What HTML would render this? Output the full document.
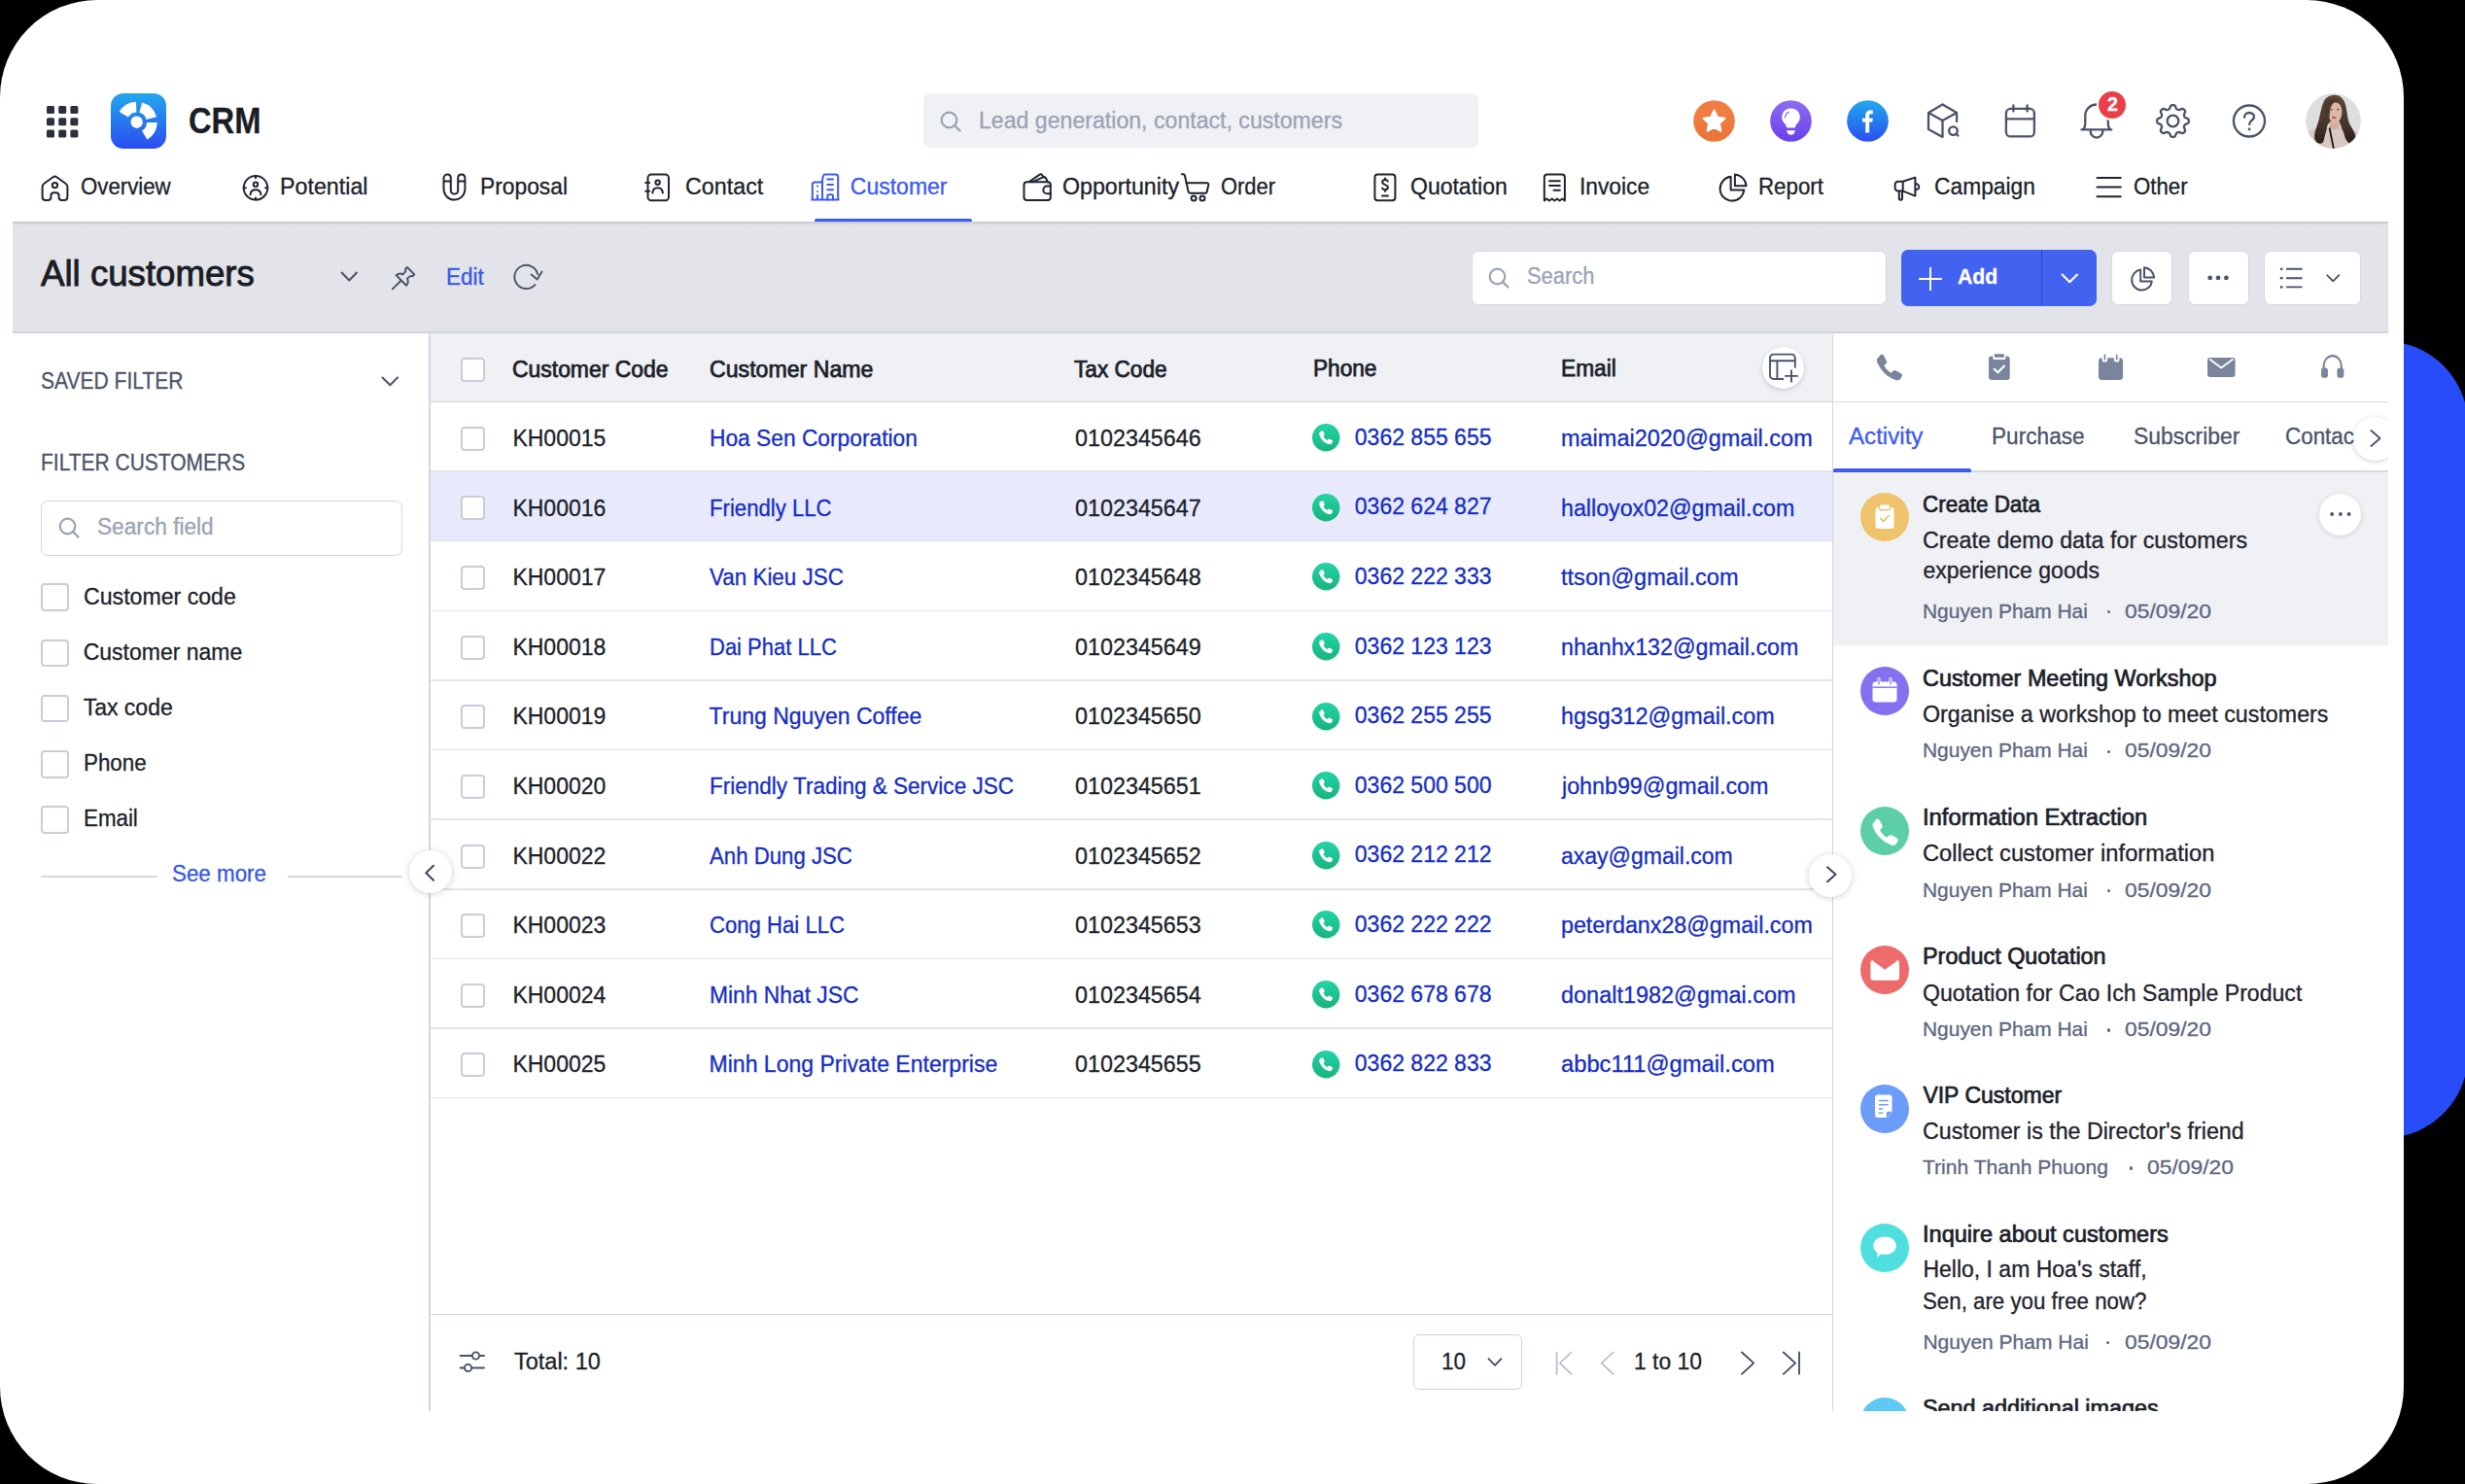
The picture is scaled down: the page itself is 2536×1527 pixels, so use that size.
<!DOCTYPE html>
<html><head><meta charset="utf-8"><style>
html,body{margin:0;padding:0;}
body{width:2536px;height:1527px;overflow:hidden;background:#000;position:relative;font-family:"Liberation Sans", sans-serif;}
.t{position:absolute;white-space:pre;font-family:"Liberation Sans", sans-serif;-webkit-text-stroke:0.3px currentColor;}
svg{display:block}
</style></head><body>
<div style="position:absolute;left:2300.0px;top:351.3px;width:239.0px;height:819.7px;background:#284cf7;border-radius:86px;"></div><div style="position:absolute;left:0.0px;top:0.0px;width:2473.0px;height:1527.0px;background:#fff;border-radius:100px;"></div><svg style="position:absolute;left:48.0px;top:108.5px;overflow:visible;" width="32" height="32" viewBox="0 0 32 32"><rect x="0.0" y="0.0" width="8" height="8" rx="1.5" fill="#2b303c"/><rect x="12.2" y="0.0" width="8" height="8" rx="1.5" fill="#2b303c"/><rect x="24.4" y="0.0" width="8" height="8" rx="1.5" fill="#2b303c"/><rect x="0.0" y="12.2" width="8" height="8" rx="1.5" fill="#2b303c"/><rect x="12.2" y="12.2" width="8" height="8" rx="1.5" fill="#2b303c"/><rect x="24.4" y="12.2" width="8" height="8" rx="1.5" fill="#2b303c"/><rect x="0.0" y="24.4" width="8" height="8" rx="1.5" fill="#2b303c"/><rect x="12.2" y="24.4" width="8" height="8" rx="1.5" fill="#2b303c"/><rect x="24.4" y="24.4" width="8" height="8" rx="1.5" fill="#2b303c"/></svg><svg style="position:absolute;left:114.0px;top:96.0px;overflow:visible;" width="57" height="57" viewBox="0 0 57 57"><defs><linearGradient id="lg" x1="0" y1="0" x2="0" y2="1"><stop offset="0" stop-color="#22a7ee"/><stop offset="1" stop-color="#2b4cf0"/></linearGradient></defs><rect x="0" y="0" width="57" height="57" rx="13" fill="url(#lg)"/><circle cx="26.7" cy="29.7" r="6.2" fill="#fff"/><path d="M17.87,24.40 L8.70,18.88 A21,21 0 0 1 25.97,8.71 L26.34,19.41 A10.3,10.3 0 0 0 17.87,24.40Z" fill="#fff"/><path d="M29.37,19.75 L32.14,9.42 A21,21 0 0 1 46.98,24.26 L36.65,27.03 A10.3,10.3 0 0 0 29.37,19.75Z" fill="#fff"/><path d="M37.00,29.88 L47.70,30.07 A21,21 0 0 1 37.52,47.70 L32.00,38.53 A10.3,10.3 0 0 0 37.00,29.88Z" fill="#fff"/></svg><div class="t" style="left:193.5px;top:106.7px;font-size:36px;line-height:36px;color:#1a1d26;font-weight:700;transform:scaleX(0.9086);transform-origin:0 0;">CRM</div><div style="position:absolute;left:950.0px;top:96.0px;width:571.0px;height:56.0px;background:#f0f1f4;border-radius:7px;"></div><svg style="position:absolute;left:967.0px;top:114.0px;overflow:visible;" width="22" height="22" viewBox="0 0 22 22"><circle cx="9.5" cy="9.5" r="7.8" fill="none" stroke="#9aa3b4" stroke-width="2.2"/><path d="M15.3 15.3 L20.5 20.5" stroke="#9aa3b4" stroke-width="2.4" stroke-linecap="round"/></svg><div class="t" style="left:1007.4px;top:112.9px;font-size:23px;line-height:23px;color:#9aa3b4;font-weight:400;transform:scaleX(1.0052);transform-origin:0 0;">Lead generation, contact, customers</div><svg style="position:absolute;left:1742.0px;top:103.0px;overflow:visible;" width="43" height="43" viewBox="0 0 43 43"><defs><linearGradient id="og" x1="0" y1="0" x2="0" y2="1"><stop offset="0" stop-color="#f07f45"/><stop offset="1" stop-color="#ec7537"/></linearGradient></defs><circle cx="21.5" cy="21.5" r="21.3" fill="url(#og)"/><polygon points="21.50,10.80 24.79,17.77 32.44,18.75 26.83,24.03 28.26,31.60 21.50,27.90 14.74,31.60 16.17,24.03 10.56,18.75 18.21,17.77" fill="#fff" stroke="#fff" stroke-width="2.2" stroke-linejoin="round"/></svg><svg style="position:absolute;left:1821.0px;top:103.0px;overflow:visible;" width="43" height="43" viewBox="0 0 43 43"><defs><linearGradient id="pg" x1="0" y1="0" x2="0" y2="1"><stop offset="0" stop-color="#8b6ff2"/><stop offset="1" stop-color="#6a3fea"/></linearGradient></defs><circle cx="21.5" cy="21.5" r="21.3" fill="url(#pg)"/><path d="M21.5,8.5 C15.8,8.5 12.2,12.6 12.2,17.6 C12.2,21 14,23.4 16.2,25.6 L17.3,28.5 L25.7,28.5 L26.8,25.6 C29,23.4 30.8,21 30.8,17.6 C30.8,12.6 27.2,8.5 21.5,8.5Z" fill="#fff"/><path d="M17.3,31.3 L25.7,31.3 C25.7,34.2 24,35.8 21.5,35.8 C19,35.8 17.3,34.2 17.3,31.3Z" fill="#fff"/><path d="M15.6,18 C15.8,15.2 17.2,13.2 19.5,12.2" fill="none" stroke="#7b55ee" stroke-width="1.2" stroke-linecap="round"/></svg><svg style="position:absolute;left:1899.5px;top:103.0px;overflow:visible;" width="43" height="43" viewBox="0 0 43 43"><defs><linearGradient id="fg" x1="0" y1="0" x2="0" y2="1"><stop offset="0" stop-color="#21a8ef"/><stop offset="1" stop-color="#2a4ff0"/></linearGradient></defs><circle cx="21.5" cy="21.5" r="21.3" fill="url(#fg)"/><path d="M19.2,33.6 L19.2,22.6 L16,22.6 L16,18.8 L19.2,18.8 L19.2,16 C19.2,12.6 21.2,10.6 24.4,10.6 C25.5,10.6 26.4,10.7 26.8,10.8 L26.8,14.2 L24.9,14.2 C23.4,14.2 23.1,14.9 23.1,16 L23.1,18.8 L26.8,18.8 L26.3,22.6 L23.1,22.6 L23.1,33.6Z" fill="#fff"/></svg><svg style="position:absolute;left:1982.0px;top:105.0px;overflow:visible;" width="36" height="38" viewBox="0 0 36 38"><path d="M16.5,2.4 L31.1,11.1 L31.1,20.1 M16.5,2.4 L2,11.1 L2,28 L16.5,35.9 M2,11.1 L16.5,19 L31.1,11.1 M16.5,19 L16.5,35.9" fill="none" stroke="#4a5367" stroke-width="2.3" stroke-linecap="round" stroke-linejoin="round"/><circle cx="27.5" cy="29.6" r="4.3" fill="none" stroke="#4a5367" stroke-width="2.3" stroke-linecap="round" stroke-linejoin="round"/><path d="M30.7,32.8 L32.4,34.5" fill="none" stroke="#4a5367" stroke-width="2.3" stroke-linecap="round" stroke-linejoin="round"/></svg><svg style="position:absolute;left:2062.0px;top:107.0px;overflow:visible;" width="33" height="35" viewBox="0 0 33 35"><rect x="1.9" y="4.9" width="29" height="28.5" rx="4.5" fill="none" stroke="#4a5367" stroke-width="2.3" stroke-linecap="round" stroke-linejoin="round"/><path d="M1.9,15.4 L30.9,15.4 M9.4,1.4 L9.4,7.6 M23.6,1.4 L23.6,7.6" fill="none" stroke="#4a5367" stroke-width="2.3" stroke-linecap="round" stroke-linejoin="round"/></svg><svg style="position:absolute;left:2140.0px;top:106.0px;overflow:visible;" width="34" height="38" viewBox="0 0 34 38"><path d="M1.5,27.4 L32.3,27.4 M3,27.4 C4.8,25.8 5.3,23.5 5.3,20 L5.3,13 C5.3,6.5 10.5,1.5 17,1.5 C23.5,1.5 28.8,6.5 28.8,13 L28.8,20 C28.8,23.5 29.3,25.8 31,27.4" fill="none" stroke="#4a5367" stroke-width="2.3" stroke-linecap="round" stroke-linejoin="round"/><path d="M10.6,28.2 C10.6,32.6 13.5,35.6 17,35.6 C20.5,35.6 23.4,32.6 23.4,28.2" fill="none" stroke="#4a5367" stroke-width="2.3" stroke-linecap="round" stroke-linejoin="round"/></svg><div style="position:absolute;left:2156.6px;top:91.6px;width:32.8px;height:32.8px;background:#ea3f48;border:2.3px solid #fff;border-radius:50%;box-sizing:border-box;"></div><div class="t" style="left:2168.4px;top:96.9px;font-size:20px;line-height:20px;color:#fff;font-weight:700;transform:scaleX(0.9820);transform-origin:0 0;">2</div><svg style="position:absolute;left:2218.0px;top:106.9px;overflow:visible;" width="35" height="35" viewBox="0 0 35 35"><path d="M17.50,1.10 L18.14,1.14 L18.78,1.27 L19.38,1.58 L19.92,2.22 L20.34,3.23 L20.68,4.25 L21.05,4.92 L21.46,5.30 L21.90,5.56 L22.36,5.77 L22.83,5.94 L23.32,6.07 L23.89,6.09 L24.62,5.88 L25.58,5.40 L26.59,4.99 L27.42,4.91 L28.07,5.12 L28.62,5.48 L29.10,5.90 L29.52,6.38 L29.88,6.93 L30.09,7.58 L30.01,8.41 L29.60,9.42 L29.12,10.38 L28.91,11.11 L28.93,11.68 L29.06,12.17 L29.23,12.64 L29.44,13.10 L29.70,13.54 L30.08,13.95 L30.75,14.32 L31.77,14.66 L32.78,15.08 L33.42,15.62 L33.73,16.22 L33.86,16.86 L33.90,17.50 L33.86,18.14 L33.73,18.78 L33.42,19.38 L32.78,19.92 L31.77,20.34 L30.75,20.68 L30.08,21.05 L29.70,21.46 L29.44,21.90 L29.23,22.36 L29.06,22.83 L28.93,23.32 L28.91,23.89 L29.12,24.62 L29.60,25.58 L30.01,26.59 L30.09,27.42 L29.88,28.07 L29.52,28.62 L29.10,29.10 L28.62,29.52 L28.07,29.88 L27.42,30.09 L26.59,30.01 L25.58,29.60 L24.62,29.12 L23.89,28.91 L23.32,28.93 L22.83,29.06 L22.36,29.23 L21.90,29.44 L21.46,29.70 L21.05,30.08 L20.68,30.75 L20.34,31.77 L19.92,32.78 L19.38,33.42 L18.78,33.73 L18.14,33.86 L17.50,33.90 L16.86,33.86 L16.22,33.73 L15.62,33.42 L15.08,32.78 L14.66,31.77 L14.32,30.75 L13.95,30.08 L13.54,29.70 L13.10,29.44 L12.64,29.23 L12.17,29.06 L11.68,28.93 L11.11,28.91 L10.38,29.12 L9.42,29.60 L8.41,30.01 L7.58,30.09 L6.93,29.88 L6.38,29.52 L5.90,29.10 L5.48,28.62 L5.12,28.07 L4.91,27.42 L4.99,26.59 L5.40,25.58 L5.88,24.62 L6.09,23.89 L6.07,23.32 L5.94,22.83 L5.77,22.36 L5.56,21.90 L5.30,21.46 L4.92,21.05 L4.25,20.68 L3.23,20.34 L2.22,19.92 L1.58,19.38 L1.27,18.78 L1.14,18.14 L1.10,17.50 L1.14,16.86 L1.27,16.22 L1.58,15.62 L2.22,15.08 L3.23,14.66 L4.25,14.32 L4.92,13.95 L5.30,13.54 L5.56,13.10 L5.77,12.64 L5.94,12.17 L6.07,11.68 L6.09,11.11 L5.88,10.38 L5.40,9.42 L4.99,8.41 L4.91,7.58 L5.12,6.93 L5.48,6.38 L5.90,5.90 L6.38,5.48 L6.93,5.12 L7.58,4.91 L8.41,4.99 L9.42,5.40 L10.38,5.88 L11.11,6.09 L11.68,6.07 L12.17,5.94 L12.64,5.77 L13.10,5.56 L13.54,5.30 L13.95,4.92 L14.32,4.25 L14.66,3.23 L15.08,2.22 L15.62,1.58 L16.22,1.27 L16.86,1.14 L17.50,1.10Z" fill="none" stroke="#4a5367" stroke-width="2.3" stroke-linecap="round" stroke-linejoin="round"/><circle cx="17.5" cy="17.5" r="5.8" fill="none" stroke="#4a5367" stroke-width="2.3" stroke-linecap="round" stroke-linejoin="round"/></svg><svg style="position:absolute;left:2296.0px;top:107.0px;overflow:visible;" width="36" height="36" viewBox="0 0 36 36"><circle cx="18" cy="17.5" r="16" fill="none" stroke="#4a5367" stroke-width="2.3" stroke-linecap="round" stroke-linejoin="round"/><path d="M13,13.8 C13,10.8 15.2,9 18,9 C20.8,9 23,10.8 23,13.5 C23,16.6 18.2,17 18.2,21" fill="none" stroke="#4a5367" stroke-width="2.3" stroke-linecap="round" stroke-linejoin="round"/><circle cx="18.1" cy="26" r="1.4" fill="#4a5367"/></svg><svg style="position:absolute;left:2371.5px;top:96.2px;overflow:visible;" width="57" height="57" viewBox="0 0 57 57"><defs><clipPath id="avc"><circle cx="28.5" cy="28.5" r="28.3"/></clipPath><linearGradient id="hairg" x1="0" y1="0" x2="0" y2="1"><stop offset="0" stop-color="#5e4838"/><stop offset="0.6" stop-color="#45342a"/><stop offset="1" stop-color="#2a1f19"/></linearGradient></defs><g clip-path="url(#avc)"><rect width="57" height="57" fill="#dedde0"/><path d="M0,57 L1,44 C3,39 6,37 10,36.5 L29,35 L47,36.5 C52,38 55,42 57,47 L57,57Z" fill="#d8c8c3"/><path d="M29.3,1.8 C33,1.8 36,2.4 39.7,8 C41.6,12 42.4,18 43,23 C43.6,27 44.2,29 44.9,30.6 C46,33.5 48,36 50.5,41 C52,44.5 51.8,48.5 49.2,51.4 C47.5,52.5 46,52.2 45.4,51.8 C43,50 41.5,48 40.7,45.7 C39.8,43 39.2,40.5 38.3,38.6 C37.4,36 36.6,34 34.5,28.7 L23.7,30.6 C22.5,33 22,34.5 21.8,36.3 C21.2,39 20.5,41.5 19.9,43.3 C19.3,46 18.8,49 18,50.4 C16.5,51.8 14.8,51.8 13.8,51.4 C11.5,51 10,49.5 9.3,46.5 C8.8,43 9.6,39 11.4,34.4 C12.6,31 13.2,29 13.8,26.8 C14.6,23 15,20.5 15.7,18.3 C16.5,14.5 17,12.5 18,10.3 C19.2,7 20.2,5.5 21.8,4.6 C24,2.6 26.5,1.8 29.3,1.8Z" fill="url(#hairg)"/><path d="M24.6,29 L34.5,29 L34.8,36.3 C32.5,37.5 27,37.5 24.4,36.3Z" fill="#d4ae9c"/><path d="M30.6,9.4 C34.8,9.4 37.4,13.5 37.4,19 C37.4,25.5 34.2,30.6 30.2,30.6 C26.5,30.6 23.8,26.5 23,21 C22.5,15 25.8,9.4 30.6,9.4Z" fill="#dab8a7"/><path d="M19.5,11 C22.5,6 28,4.8 33.5,6.2 C30.5,7.5 27,11 25.5,16 C24.8,19.5 24.5,24 24.2,30.5 L21.5,31 C20.5,24 19.8,17 19.5,11Z" fill="#4b392d"/><ellipse cx="26.6" cy="16.8" rx="1.3" ry="0.8" fill="#6a5448"/><ellipse cx="33.2" cy="16.6" rx="1.3" ry="0.8" fill="#6a5448"/><ellipse cx="29.2" cy="25.1" rx="2.4" ry="1.05" fill="#c5505a"/><path d="M24.6,35.5 L28.9,57" stroke="#141414" stroke-width="1.8"/></g></svg><svg style="position:absolute;left:42.0px;top:178.5px;overflow:visible;" width="30" height="29" viewBox="0 0 30 29"><path d="M3.5,9.8 L12.6,3.2 C13.7,2.4 15.2,2.4 16.3,3.2 L25.4,9.8 C26.5,10.6 27.4,11.8 27.4,13.3 L27.4,23.5 C27.4,25.6 25.9,27 24,27 L21.8,27 C20,27 18.6,25.8 18.6,24 L18.6,22.3 C18.6,20.5 17.2,19.2 15.6,19.2 L13.4,19.2 C11.7,19.2 10.4,20.5 10.4,22.3 L10.4,24 C10.4,25.8 9,27 7.2,27 L5,27 C3.1,27 1.6,25.6 1.6,23.5 L1.6,13.3 C1.6,11.8 2.4,10.6 3.5,9.8Z" fill="none" stroke="#1f2430" stroke-width="2" stroke-linecap="round" stroke-linejoin="round"/><circle cx="14.5" cy="11.6" r="2.7" fill="none" stroke="#1f2430" stroke-width="2" stroke-linecap="round" stroke-linejoin="round"/></svg><div class="t" style="left:82.5px;top:180.5px;font-size:23px;line-height:23px;color:#1b1f2a;font-weight:400;transform:scaleX(0.9665);transform-origin:0 0;">Overview</div><svg style="position:absolute;left:249.0px;top:180.0px;overflow:visible;" width="28" height="28" viewBox="0 0 28 28"><circle cx="14" cy="13.3" r="12.3" fill="none" stroke="#1f2430" stroke-width="2" stroke-linecap="round" stroke-linejoin="round"/><path d="M14,1 L14,3.2 M14,23.4 L14,25.6 M1.7,13.3 L3.9,13.3 M24.1,13.3 L26.3,13.3" fill="none" stroke="#1f2430" stroke-width="2" stroke-linecap="round" stroke-linejoin="round"/><circle cx="14" cy="9.7" r="2.2" fill="none" stroke="#1f2430" stroke-width="2" stroke-linecap="round" stroke-linejoin="round"/><path d="M8.6,20.2 C8.8,17 11,15.2 14,15.2 C17,15.2 19.2,17 19.4,20.2" fill="none" stroke="#1f2430" stroke-width="2" stroke-linecap="round" stroke-linejoin="round"/></svg><div class="t" style="left:288.0px;top:180.5px;font-size:23px;line-height:23px;color:#1b1f2a;font-weight:400;transform:scaleX(1.0109);transform-origin:0 0;">Potential</div><svg style="position:absolute;left:454.0px;top:178.0px;overflow:visible;" width="28" height="30" viewBox="0 0 28 30"><path d="M2.5,5.5 C2.5,3.2 4.2,1.6 6.3,1.6 C8.4,1.6 9.8,3.2 9.8,5.5 L9.8,18.2 C9.8,20.3 11.6,21.6 13.5,21.6 C15.4,21.6 17.2,20.3 17.2,18.2 L17.2,5.5 C17.2,3.2 18.6,1.6 20.7,1.6 C22.8,1.6 24.4,3.2 24.4,5.5 L24.4,16 C24.4,23 19.5,27.6 13.5,27.6 C7.5,27.6 2.5,23 2.5,16Z M2.5,8.4 L9.8,8.4 M17.2,8.4 L24.4,8.4" fill="none" stroke="#1f2430" stroke-width="2" stroke-linecap="round" stroke-linejoin="round"/></svg><div class="t" style="left:494.0px;top:180.5px;font-size:23px;line-height:23px;color:#1b1f2a;font-weight:400;transform:scaleX(0.9913);transform-origin:0 0;">Proposal</div><svg style="position:absolute;left:662.0px;top:178.0px;overflow:visible;" width="28" height="30" viewBox="0 0 28 30"><rect x="4.5" y="1.6" width="21.5" height="26.6" rx="3.5" fill="none" stroke="#1f2430" stroke-width="2" stroke-linecap="round" stroke-linejoin="round"/><path d="M2.2,9.9 L6.2,9.9 M2.2,18.8 L6.2,18.8" fill="none" stroke="#1f2430" stroke-width="2" stroke-linecap="round" stroke-linejoin="round"/><circle cx="14.6" cy="9.8" r="2.2" fill="none" stroke="#1f2430" stroke-width="2" stroke-linecap="round" stroke-linejoin="round"/><path d="M9.3,20.6 C9.6,17.2 11.8,15.3 14.6,15.3 C17.4,15.3 19.6,17.2 19.9,20.6" fill="none" stroke="#1f2430" stroke-width="2" stroke-linecap="round" stroke-linejoin="round"/></svg><div class="t" style="left:704.7px;top:180.5px;font-size:23px;line-height:23px;color:#1b1f2a;font-weight:400;transform:scaleX(1.0127);transform-origin:0 0;">Contact</div><svg style="position:absolute;left:834.0px;top:178.0px;overflow:visible;" width="30" height="30" viewBox="0 0 30 30"><path d="M12,27.4 L12,8.2 C12,6.7 12.9,1.6 14.5,1.6 L25.8,1.6 C27.3,1.6 28.2,2.6 28.2,4.2 L28.2,27.4 Z M12,27.4 L12,9.6 L4.3,9.6 C2.8,9.6 1.8,10.6 1.8,12 L1.8,27.4 Z M1.2,27.4 L28.8,27.4" fill="none" stroke="#3d5af1" stroke-width="2" stroke-linecap="round" stroke-linejoin="round"/><path d="M17.3,6.6 L23,6.6 M17.3,11.9 L23,11.9 M17.3,17.2 L23,17.2 M7,13.5 L7,13.6 M7,19 L7,19.1 M7,23 L7,27 M17.3,27.4 L17.3,23.8 C17.3,22.9 18,22.3 18.8,22.3 L21.5,22.3 C22.3,22.3 23,22.9 23,23.8 L23,27.4" fill="none" stroke="#3d5af1" stroke-width="2" stroke-linecap="round" stroke-linejoin="round"/></svg><div class="t" style="left:874.8px;top:180.5px;font-size:23px;line-height:23px;color:#3d5af1;font-weight:400;">Customer</div><div style="position:absolute;left:838.0px;top:224.8px;width:161.5px;height:3.8px;background:#3d5af1;border-radius:2px 2px 0 0;"></div><svg style="position:absolute;left:1052.0px;top:178.0px;overflow:visible;" width="31" height="30" viewBox="0 0 31 30"><rect x="1.5" y="9.3" width="27.3" height="18.7" rx="3" fill="none" stroke="#1f2430" stroke-width="2" stroke-linecap="round" stroke-linejoin="round"/><path d="M6.5,9.3 L17.6,1.6 C18.4,1.1 19.4,1.3 20,2 L22,4.6 M9.9,9.3 L21.5,4.2 C22.4,3.8 23.4,4.2 23.9,5 L25.9,9.3" fill="none" stroke="#1f2430" stroke-width="2" stroke-linecap="round" stroke-linejoin="round"/><path d="M28.8,13.6 L25,13.6 C23,13.6 21.4,15.3 21.4,17.4 C21.4,19.6 23,21.3 25,21.3 L28.8,21.3" fill="none" stroke="#1f2430" stroke-width="2" stroke-linecap="round" stroke-linejoin="round"/></svg><div class="t" style="left:1093.0px;top:180.5px;font-size:23px;line-height:23px;color:#1b1f2a;font-weight:400;transform:scaleX(1.0092);transform-origin:0 0;">Opportunity</div><svg style="position:absolute;left:1215.0px;top:177.5px;overflow:visible;" width="31" height="31" viewBox="0 0 31 31"><path d="M0.9,1.3 L2.4,1.3 C3.2,1.3 3.8,1.9 4,2.7 L7.7,19.6 C7.9,20.3 8.5,20.7 9.2,20.7 L25.2,20.7 C25.9,20.7 26.5,20.2 26.6,19.5 L28.3,12.2 C28.5,11.2 27.8,10.3 26.8,10.3 L5.3,10.3" fill="none" stroke="#1f2430" stroke-width="2" stroke-linecap="round" stroke-linejoin="round"/><circle cx="13.1" cy="25.9" r="2.5" fill="none" stroke="#1f2430" stroke-width="2" stroke-linecap="round" stroke-linejoin="round"/><circle cx="22" cy="25.9" r="2.5" fill="none" stroke="#1f2430" stroke-width="2" stroke-linecap="round" stroke-linejoin="round"/></svg><div class="t" style="left:1255.7px;top:180.5px;font-size:23px;line-height:23px;color:#1b1f2a;font-weight:400;transform:scaleX(0.9529);transform-origin:0 0;">Order</div><svg style="position:absolute;left:1413.0px;top:178.0px;overflow:visible;" width="24" height="30" viewBox="0 0 24 30"><rect x="1.4" y="1.6" width="21" height="26.6" rx="3" fill="none" stroke="#1f2430" stroke-width="2" stroke-linecap="round" stroke-linejoin="round"/><path d="M14.8,8.6 C14.3,7.6 13.3,7.1 12,7.1 C10.3,7.1 9.2,8.1 9.2,9.5 C9.2,12.6 14.9,11.6 14.9,14.8 C14.9,16.2 13.7,17.2 12,17.2 C10.6,17.2 9.5,16.6 9.1,15.6 M12,5.4 L12,7.1 M12,17.2 L12,19 M9,23.5 L15,23.5" fill="none" stroke="#1f2430" stroke-width="2" stroke-linecap="round" stroke-linejoin="round"/></svg><div class="t" style="left:1451.0px;top:180.5px;font-size:23px;line-height:23px;color:#1b1f2a;font-weight:400;">Quotation</div><svg style="position:absolute;left:1587.0px;top:178.0px;overflow:visible;" width="25" height="31" viewBox="0 0 25 31"><path d="M1.8,28.5 L1.8,4.6 C1.8,2.8 3,1.6 4.8,1.6 L19.9,1.6 C21.7,1.6 22.9,2.8 22.9,4.6 L22.9,28.5 L20.3,26.5 L17.5,28.5 L14.9,26.5 L12.3,28.5 L9.7,26.5 L7,28.5 L4.4,26.5 Z" fill="none" stroke="#1f2430" stroke-width="2" stroke-linecap="round" stroke-linejoin="round"/><path d="M7,8.2 L17.8,8.2 M7,13 L17.8,13 M11.5,17.8 L17.8,17.8" fill="none" stroke="#1f2430" stroke-width="2" stroke-linecap="round" stroke-linejoin="round"/></svg><div class="t" style="left:1625.0px;top:180.5px;font-size:23px;line-height:23px;color:#1b1f2a;font-weight:400;transform:scaleX(0.9883);transform-origin:0 0;">Invoice</div><svg style="position:absolute;left:1768.0px;top:178.0px;overflow:visible;" width="30" height="30" viewBox="0 0 30 30"><path d="M12.6,3.8 C6.2,4.6 1.6,10.2 1.6,16.3 C1.6,23.2 7.2,28.6 14,28.6 C20.4,28.6 25.6,23.8 26.3,17.5 L12.6,17.5 Z" fill="none" stroke="#1f2430" stroke-width="2" stroke-linecap="round" stroke-linejoin="round"/><path d="M16.9,1.4 L16.9,13.2 L28.5,13.2 C28.1,7 23,1.9 16.9,1.4Z" fill="none" stroke="#1f2430" stroke-width="2" stroke-linecap="round" stroke-linejoin="round"/></svg><div class="t" style="left:1809.0px;top:180.5px;font-size:23px;line-height:23px;color:#1b1f2a;font-weight:400;transform:scaleX(0.9702);transform-origin:0 0;">Report</div><svg style="position:absolute;left:1948.0px;top:180.0px;overflow:visible;" width="31" height="28" viewBox="0 0 31 28"><path d="M22.4,2.6 L22.4,21.6 L9.7,16.6 L5.2,16.6 C3,16.6 1.6,15 1.6,12.8 L1.6,10.6 C1.6,8.4 3,6.8 5.2,6.8 L9.7,6.8 Z M9.7,6.8 L9.7,16.6 M22.4,9 C24.6,9 26.3,10.4 26.3,12.2 C26.3,14 24.6,15.4 22.4,15.4 M5.8,16.6 L5.8,24 C5.8,25 6.5,25.7 7.4,25.7 C8.3,25.7 9,25 9,24 L9,16.6" fill="none" stroke="#1f2430" stroke-width="2" stroke-linecap="round" stroke-linejoin="round"/></svg><div class="t" style="left:1989.6px;top:180.5px;font-size:23px;line-height:23px;color:#1b1f2a;font-weight:400;transform:scaleX(0.9912);transform-origin:0 0;">Campaign</div><svg style="position:absolute;left:2156.0px;top:180.0px;overflow:visible;" width="28" height="26" viewBox="0 0 28 26"><path d="M1.5,3 L25.8,3 M1.5,12.6 L25.8,12.6 M1.5,22.2 L25.8,22.2" fill="none" stroke="#1f2430" stroke-width="2" stroke-linecap="round" stroke-linejoin="round"/></svg><div class="t" style="left:2195.0px;top:180.5px;font-size:23px;line-height:23px;color:#1b1f2a;font-weight:400;transform:scaleX(0.9652);transform-origin:0 0;">Other</div><div style="position:absolute;left:13.2px;top:228.0px;width:2443.8px;height:114.5px;background:#e3e4e9;"></div><div style="position:absolute;left:13.2px;top:228.3px;width:2443.8px;height:2.1px;background:#c9ccd4;"></div><div style="position:absolute;left:13.2px;top:230.4px;width:2443.8px;height:2.5px;background:linear-gradient(#dadce2,#e3e4e9);"></div><div style="position:absolute;left:13.0px;top:341.0px;width:2444.0px;height:1.8px;background:#d0d4dc;"></div><div class="t" style="left:42.4px;top:263.2px;font-size:37px;line-height:37px;color:#1a1d26;font-weight:400;transform:scaleX(0.9901);transform-origin:0 0;-webkit-text-stroke:0.9px #1a1d26;">All customers</div><svg style="position:absolute;left:350.0px;top:279.0px;overflow:visible;" width="19" height="12" viewBox="0 0 19 12"><path d="M1.5,1.5 L9.3,9.5 L17,1.5" fill="none" stroke="#4a5367" stroke-width="2" stroke-linecap="round" stroke-linejoin="round"/></svg><svg style="position:absolute;left:395.0px;top:265.0px;overflow:visible;" width="40" height="40" viewBox="0 0 40 40"><g transform="translate(17.8,23.5) rotate(45) scale(1.05)"><path d="M-5,-13.2 L5,-13.2 L5,-10.8 C3.6,-10.3 3,-8.8 3,-7.2 L3,-5.2 C5.5,-4.6 7,-2.6 7,0 L-7,0 C-7,-2.6 -5.5,-4.6 -3,-5.2 L-3,-7.2 C-3,-8.8 -3.6,-10.3 -5,-10.8 Z M0,0 L0,12" fill="none" stroke="#4a5367" stroke-width="1.85" stroke-linecap="round" stroke-linejoin="round"/></g></svg><div class="t" style="left:459.0px;top:273.7px;font-size:23px;line-height:23px;color:#3557e8;font-weight:400;transform:scaleX(0.9768);transform-origin:0 0;">Edit</div><svg style="position:absolute;left:525.0px;top:268.0px;overflow:visible;" width="36" height="36" viewBox="0 0 36 36"><path d="M25.4,25.1 A12.1,12.1 0 1 1 28.2,14.1 M21.6,14.6 L27.7,19.6 L32.6,11.6" fill="none" stroke="#4a5367" stroke-width="1.9" stroke-linecap="round" stroke-linejoin="round"/></svg><div style="position:absolute;left:1514.0px;top:258.0px;width:427.0px;height:55.5px;background:#fff;border:1.5px solid #d3d7df;border-radius:7px;box-sizing:border-box;"></div><svg style="position:absolute;left:1531.0px;top:275.0px;overflow:visible;" width="22" height="22" viewBox="0 0 22 22"><circle cx="9.5" cy="9.5" r="7.8" fill="none" stroke="#9aa3b4" stroke-width="2.2"/><path d="M15.3 15.3 L20.5 20.5" stroke="#9aa3b4" stroke-width="2.4" stroke-linecap="round"/></svg><div class="t" style="left:1570.6px;top:273.3px;font-size:23px;line-height:23px;color:#9aa3b4;font-weight:400;transform:scaleX(0.9526);transform-origin:0 0;">Search</div><div style="position:absolute;left:1956.0px;top:257.0px;width:201.0px;height:57.5px;background:#4262f0;border-radius:7px;"></div><div style="position:absolute;left:2099.8px;top:257.0px;width:1.5px;height:57.5px;background:#2a48e0;"></div><svg style="position:absolute;left:1974.0px;top:274.5px;overflow:visible;" width="24" height="24" viewBox="0 0 24 24"><path d="M12,0.8 L12,23.2 M0.8,12 L23.2,12" stroke="#fff" stroke-width="1.9" stroke-linecap="round"/></svg><div class="t" style="left:2014.0px;top:273.8px;font-size:22.5px;line-height:22.5px;color:#fff;font-weight:700;transform:scaleX(0.9437);transform-origin:0 0;">Add</div><svg style="position:absolute;left:2119.5px;top:280.5px;overflow:visible;" width="19" height="11" viewBox="0 0 19 11"><path d="M1.6,1.6 L9.3,9.2 L17,1.6" fill="none" stroke="#fff" stroke-width="2.1" stroke-linecap="round" stroke-linejoin="round"/></svg><div style="position:absolute;left:2172.0px;top:258.0px;width:63.0px;height:55.5px;background:#fff;border:1.5px solid #d3d7df;border-radius:7px;box-sizing:border-box;"></div><div style="position:absolute;left:2250.5px;top:258.0px;width:63.5px;height:55.5px;background:#fff;border:1.5px solid #d3d7df;border-radius:7px;box-sizing:border-box;"></div><div style="position:absolute;left:2329.0px;top:258.0px;width:99.5px;height:55.5px;background:#fff;border:1.5px solid #d3d7df;border-radius:7px;box-sizing:border-box;"></div><svg style="position:absolute;left:2190.5px;top:272.5px;overflow:visible;" width="28" height="28" viewBox="0 0 28 28"><path d="M11.2,4.4 C6,5.2 2.2,9.8 2.2,15 C2.2,20.8 6.8,25.6 12.6,25.6 C17.8,25.6 22.1,21.8 22.8,16.6 L11.2,16.6 Z M15,2.2 L15,12.6 L25.2,12.6 C24.8,7.2 20.4,2.7 15,2.2Z" fill="none" stroke="#4a5367" stroke-width="2" stroke-linejoin="round"/></svg><svg style="position:absolute;left:2270.0px;top:281.5px;overflow:visible;" width="26" height="8" viewBox="0 0 26 8"><circle cx="3.7" cy="3.9" r="2.4" fill="#4a5367"/><circle cx="12" cy="3.9" r="2.4" fill="#4a5367"/><circle cx="20.4" cy="3.9" r="2.4" fill="#4a5367"/></svg><svg style="position:absolute;left:2345.0px;top:274.0px;overflow:visible;" width="26" height="24" viewBox="0 0 26 24"><path d="M7.8,2.8 L22.8,2.8 M7.8,12.2 L22.8,12.2 M7.8,21.4 L22.8,21.4" stroke="#4a5367" stroke-width="1.9" stroke-linecap="round"/><circle cx="2.2" cy="2.8" r="1.4" fill="#4a5367"/><circle cx="2.2" cy="12.2" r="1.4" fill="#4a5367"/><circle cx="2.2" cy="21.4" r="1.4" fill="#4a5367"/></svg><svg style="position:absolute;left:2393.0px;top:281.5px;overflow:visible;" width="15" height="9" viewBox="0 0 15 9"><path d="M1.2,1.2 L7.3,7.3 L13.4,1.2" fill="none" stroke="#4a5367" stroke-width="1.9" stroke-linecap="round" stroke-linejoin="round"/></svg><div class="t" style="left:42.4px;top:381.1px;font-size:23px;line-height:23px;color:#4a5468;font-weight:400;transform:scaleX(0.9139);transform-origin:0 0;">SAVED FILTER</div><svg style="position:absolute;left:392.0px;top:387.0px;overflow:visible;" width="19" height="12" viewBox="0 0 19 12"><path d="M1.5,1.5 L9.3,9.3 L17,1.5" fill="none" stroke="#4a5468" stroke-width="2" stroke-linecap="round" stroke-linejoin="round"/></svg><div class="t" style="left:42.4px;top:464.8px;font-size:23px;line-height:23px;color:#4a5468;font-weight:400;transform:scaleX(0.9121);transform-origin:0 0;">FILTER CUSTOMERS</div><div style="position:absolute;left:42.0px;top:515.0px;width:372.0px;height:56.5px;background:#fff;border:1.6px solid #d3d7df;border-radius:7px;box-sizing:border-box;"></div><svg style="position:absolute;left:60.0px;top:532.0px;overflow:visible;" width="22" height="22" viewBox="0 0 22 22"><circle cx="9.5" cy="9.5" r="7.8" fill="none" stroke="#9aa3b4" stroke-width="2.2"/><path d="M15.3 15.3 L20.5 20.5" stroke="#9aa3b4" stroke-width="2.4" stroke-linecap="round"/></svg><div class="t" style="left:99.8px;top:530.7px;font-size:23px;line-height:23px;color:#9aa3b4;font-weight:400;transform:scaleX(0.9857);transform-origin:0 0;">Search field</div><div style="position:absolute;left:42.4px;top:600.4px;width:28.5px;height:28.5px;background:#fff;border:2px solid #c8cdd8;border-radius:4px;box-sizing:border-box;"></div><div class="t" style="left:85.7px;top:602.6px;font-size:23px;line-height:23px;color:#1b1f2a;font-weight:400;transform:scaleX(1.0055);transform-origin:0 0;">Customer code</div><div style="position:absolute;left:42.4px;top:657.6px;width:28.5px;height:28.5px;background:#fff;border:2px solid #c8cdd8;border-radius:4px;box-sizing:border-box;"></div><div class="t" style="left:85.7px;top:659.8px;font-size:23px;line-height:23px;color:#1b1f2a;font-weight:400;">Customer name</div><div style="position:absolute;left:42.4px;top:714.8px;width:28.5px;height:28.5px;background:#fff;border:2px solid #c8cdd8;border-radius:4px;box-sizing:border-box;"></div><div class="t" style="left:85.7px;top:717.0px;font-size:23px;line-height:23px;color:#1b1f2a;font-weight:400;">Tax code</div><div style="position:absolute;left:42.4px;top:772.0px;width:28.5px;height:28.5px;background:#fff;border:2px solid #c8cdd8;border-radius:4px;box-sizing:border-box;"></div><div class="t" style="left:85.7px;top:774.2px;font-size:23px;line-height:23px;color:#1b1f2a;font-weight:400;transform:scaleX(0.9725);transform-origin:0 0;">Phone</div><div style="position:absolute;left:42.4px;top:829.2px;width:28.5px;height:28.5px;background:#fff;border:2px solid #c8cdd8;border-radius:4px;box-sizing:border-box;"></div><div class="t" style="left:85.7px;top:831.4px;font-size:23px;line-height:23px;color:#1b1f2a;font-weight:400;transform:scaleX(0.9704);transform-origin:0 0;">Email</div><div style="position:absolute;left:42.0px;top:900.8px;width:120.0px;height:2.0px;background:#d5d9e1;"></div><div style="position:absolute;left:296.0px;top:900.8px;width:118.0px;height:2.0px;background:#d5d9e1;"></div><div class="t" style="left:176.6px;top:888.4px;font-size:23px;line-height:23px;color:#3557e8;font-weight:400;transform:scaleX(0.9729);transform-origin:0 0;">See more</div><div style="position:absolute;left:441.0px;top:342.0px;width:1.8px;height:1110.0px;background:#d3d7df;"></div><div style="position:absolute;left:1884.5px;top:342.0px;width:1.8px;height:1110.0px;background:#d3d7df;"></div><div style="position:absolute;left:443.0px;top:343.0px;width:1441.5px;height:70.0px;background:#f0f1f4;"></div><div style="position:absolute;left:443.0px;top:412.5px;width:1441.5px;height:1.8px;background:#d5d9e1;"></div><div style="position:absolute;left:473.5px;top:368.0px;width:25.0px;height:25.0px;background:#fff;border:2px solid #c8cdd8;border-radius:4px;box-sizing:border-box;"></div><div class="t" style="left:527.4px;top:368.8px;font-size:23px;line-height:23px;color:#1b1f2a;font-weight:400;transform:scaleX(0.9965);transform-origin:0 0;color:#1b1f2a;-webkit-text-stroke:0.75px #1b1f2a;">Customer Code</div><div class="t" style="left:729.6px;top:368.8px;font-size:23px;line-height:23px;color:#1b1f2a;font-weight:400;transform:scaleX(1.0057);transform-origin:0 0;color:#1b1f2a;-webkit-text-stroke:0.75px #1b1f2a;">Customer Name</div><div class="t" style="left:1105.0px;top:368.8px;font-size:23px;line-height:23px;color:#1b1f2a;font-weight:400;transform:scaleX(0.9838);transform-origin:0 0;color:#1b1f2a;-webkit-text-stroke:0.75px #1b1f2a;">Tax Code</div><div class="t" style="left:1350.6px;top:367.5px;font-size:23px;line-height:23px;color:#1b1f2a;font-weight:400;transform:scaleX(0.9831);transform-origin:0 0;color:#1b1f2a;-webkit-text-stroke:0.75px #1b1f2a;">Phone</div><div class="t" style="left:1606.0px;top:367.5px;font-size:23px;line-height:23px;color:#1b1f2a;font-weight:400;transform:scaleX(0.9861);transform-origin:0 0;color:#1b1f2a;-webkit-text-stroke:0.75px #1b1f2a;">Email</div><div style="position:absolute;left:1813.4px;top:357.0px;width:43.0px;height:43.0px;background:#fff;border-radius:50%;box-shadow:0 2px 5px rgba(30,40,70,0.18);"></div><svg style="position:absolute;left:1818.0px;top:361.0px;overflow:visible;" width="34" height="34" viewBox="0 0 34 34"><path d="M10.4,29 L6.6,29 C4.6,29 3,27.4 3,25.4 L3,7.2 C3,5.2 4.6,3.6 6.6,3.6 L25.2,3.6 C27.2,3.6 28.8,5.2 28.8,7.2 L28.8,16.7 M3,10.2 L28.8,10.2 M10.4,10.2 L10.4,29 L16.4,29 M25,20.2 L25,31.8 M18.9,25.9 L31,25.9" fill="none" stroke="#4a5367" stroke-width="1.9" stroke-linecap="round" stroke-linejoin="round"/></svg><div style="position:absolute;left:443.0px;top:484.3px;width:1441.5px;height:1.6px;background:#e1e4ea;"></div><div style="position:absolute;left:473.5px;top:438.8px;width:25.0px;height:25.0px;background:#fff;border:2px solid #c8cdd8;border-radius:4px;box-sizing:border-box;"></div><div class="t" style="left:527.4px;top:439.8px;font-size:23px;line-height:23px;color:#1b1f2a;font-weight:400;">KH00015</div><div class="t" style="left:729.6px;top:439.8px;font-size:23px;line-height:23px;color:#152ec4;font-weight:400;transform:scaleX(0.9899);transform-origin:0 0;">Hoa Sen Corporation</div><div class="t" style="left:1105.6px;top:439.8px;font-size:23px;line-height:23px;color:#1b1f2a;font-weight:400;transform:scaleX(1.0146);transform-origin:0 0;">0102345646</div><svg style="position:absolute;left:1350.0px;top:436.0px;overflow:visible;" width="28.4" height="28.4" viewBox="0 0 28.4 28.4"><defs><linearGradient id="gph" x1="0" y1="0" x2="0" y2="1"><stop offset="0" stop-color="#25d3a6"/><stop offset="1" stop-color="#17b47e"/></linearGradient></defs><circle cx="14.2" cy="14.2" r="14.2" fill="url(#gph)"/><path d="M9.6,7.4 C10.3,7 11,7.2 11.4,7.9 L12.6,10.3 C12.9,10.9 12.8,11.6 12.3,12 L11.5,12.7 C12.2,14.5 13.6,16 15.5,16.9 L16.3,16.1 C16.7,15.6 17.4,15.5 18,15.8 L20.4,17 C21.1,17.4 21.3,18.1 20.9,18.8 L20.2,20 C19.6,21 18.4,21.5 17.2,21.1 C12.4,19.7 8.7,16 7.3,11.2 C6.9,10 7.4,8.8 8.4,8.2 Z" fill="#fff"/></svg><div class="t" style="left:1393.8px;top:438.6px;font-size:23px;line-height:23px;color:#152ec4;font-weight:400;">0362 855 655</div><div class="t" style="left:1606.0px;top:439.8px;font-size:23px;line-height:23px;color:#152ec4;font-weight:400;transform:scaleX(1.0207);transform-origin:0 0;">maimai2020@gmail.com</div><div style="position:absolute;left:443.0px;top:485.9px;width:1441.5px;height:70.0px;background:#e8eafc;"></div><div style="position:absolute;left:443.0px;top:555.9px;width:1441.5px;height:1.6px;background:#e1e4ea;"></div><div style="position:absolute;left:473.5px;top:510.4px;width:25.0px;height:25.0px;background:#fff;border:2px solid #c8cdd8;border-radius:4px;box-sizing:border-box;"></div><div class="t" style="left:527.4px;top:511.5px;font-size:23px;line-height:23px;color:#1b1f2a;font-weight:400;">KH00016</div><div class="t" style="left:729.6px;top:511.5px;font-size:23px;line-height:23px;color:#152ec4;font-weight:400;transform:scaleX(0.9631);transform-origin:0 0;">Friendly LLC</div><div class="t" style="left:1105.6px;top:511.5px;font-size:23px;line-height:23px;color:#1b1f2a;font-weight:400;transform:scaleX(1.0146);transform-origin:0 0;">0102345647</div><svg style="position:absolute;left:1350.0px;top:507.6px;overflow:visible;" width="28.4" height="28.4" viewBox="0 0 28.4 28.4"><defs><linearGradient id="gph" x1="0" y1="0" x2="0" y2="1"><stop offset="0" stop-color="#25d3a6"/><stop offset="1" stop-color="#17b47e"/></linearGradient></defs><circle cx="14.2" cy="14.2" r="14.2" fill="url(#gph)"/><path d="M9.6,7.4 C10.3,7 11,7.2 11.4,7.9 L12.6,10.3 C12.9,10.9 12.8,11.6 12.3,12 L11.5,12.7 C12.2,14.5 13.6,16 15.5,16.9 L16.3,16.1 C16.7,15.6 17.4,15.5 18,15.8 L20.4,17 C21.1,17.4 21.3,18.1 20.9,18.8 L20.2,20 C19.6,21 18.4,21.5 17.2,21.1 C12.4,19.7 8.7,16 7.3,11.2 C6.9,10 7.4,8.8 8.4,8.2 Z" fill="#fff"/></svg><div class="t" style="left:1393.8px;top:510.3px;font-size:23px;line-height:23px;color:#152ec4;font-weight:400;">0362 624 827</div><div class="t" style="left:1606.0px;top:511.5px;font-size:23px;line-height:23px;color:#152ec4;font-weight:400;transform:scaleX(1.0092);transform-origin:0 0;">halloyox02@gmail.com</div><div style="position:absolute;left:443.0px;top:627.6px;width:1441.5px;height:1.6px;background:#e1e4ea;"></div><div style="position:absolute;left:473.5px;top:582.0px;width:25.0px;height:25.0px;background:#fff;border:2px solid #c8cdd8;border-radius:4px;box-sizing:border-box;"></div><div class="t" style="left:527.4px;top:583.1px;font-size:23px;line-height:23px;color:#1b1f2a;font-weight:400;">KH00017</div><div class="t" style="left:729.6px;top:583.1px;font-size:23px;line-height:23px;color:#152ec4;font-weight:400;transform:scaleX(0.9745);transform-origin:0 0;">Van Kieu JSC</div><div class="t" style="left:1105.6px;top:583.1px;font-size:23px;line-height:23px;color:#1b1f2a;font-weight:400;transform:scaleX(1.0146);transform-origin:0 0;">0102345648</div><svg style="position:absolute;left:1350.0px;top:579.2px;overflow:visible;" width="28.4" height="28.4" viewBox="0 0 28.4 28.4"><defs><linearGradient id="gph" x1="0" y1="0" x2="0" y2="1"><stop offset="0" stop-color="#25d3a6"/><stop offset="1" stop-color="#17b47e"/></linearGradient></defs><circle cx="14.2" cy="14.2" r="14.2" fill="url(#gph)"/><path d="M9.6,7.4 C10.3,7 11,7.2 11.4,7.9 L12.6,10.3 C12.9,10.9 12.8,11.6 12.3,12 L11.5,12.7 C12.2,14.5 13.6,16 15.5,16.9 L16.3,16.1 C16.7,15.6 17.4,15.5 18,15.8 L20.4,17 C21.1,17.4 21.3,18.1 20.9,18.8 L20.2,20 C19.6,21 18.4,21.5 17.2,21.1 C12.4,19.7 8.7,16 7.3,11.2 C6.9,10 7.4,8.8 8.4,8.2 Z" fill="#fff"/></svg><div class="t" style="left:1393.8px;top:581.9px;font-size:23px;line-height:23px;color:#152ec4;font-weight:400;">0362 222 333</div><div class="t" style="left:1606.0px;top:583.1px;font-size:23px;line-height:23px;color:#152ec4;font-weight:400;transform:scaleX(1.0257);transform-origin:0 0;">ttson@gmail.com</div><div style="position:absolute;left:443.0px;top:699.2px;width:1441.5px;height:1.6px;background:#e1e4ea;"></div><div style="position:absolute;left:473.5px;top:653.7px;width:25.0px;height:25.0px;background:#fff;border:2px solid #c8cdd8;border-radius:4px;box-sizing:border-box;"></div><div class="t" style="left:527.4px;top:654.7px;font-size:23px;line-height:23px;color:#1b1f2a;font-weight:400;">KH00018</div><div class="t" style="left:729.6px;top:654.7px;font-size:23px;line-height:23px;color:#152ec4;font-weight:400;transform:scaleX(0.9562);transform-origin:0 0;">Dai Phat LLC</div><div class="t" style="left:1105.6px;top:654.7px;font-size:23px;line-height:23px;color:#1b1f2a;font-weight:400;transform:scaleX(1.0146);transform-origin:0 0;">0102345649</div><svg style="position:absolute;left:1350.0px;top:650.9px;overflow:visible;" width="28.4" height="28.4" viewBox="0 0 28.4 28.4"><defs><linearGradient id="gph" x1="0" y1="0" x2="0" y2="1"><stop offset="0" stop-color="#25d3a6"/><stop offset="1" stop-color="#17b47e"/></linearGradient></defs><circle cx="14.2" cy="14.2" r="14.2" fill="url(#gph)"/><path d="M9.6,7.4 C10.3,7 11,7.2 11.4,7.9 L12.6,10.3 C12.9,10.9 12.8,11.6 12.3,12 L11.5,12.7 C12.2,14.5 13.6,16 15.5,16.9 L16.3,16.1 C16.7,15.6 17.4,15.5 18,15.8 L20.4,17 C21.1,17.4 21.3,18.1 20.9,18.8 L20.2,20 C19.6,21 18.4,21.5 17.2,21.1 C12.4,19.7 8.7,16 7.3,11.2 C6.9,10 7.4,8.8 8.4,8.2 Z" fill="#fff"/></svg><div class="t" style="left:1393.8px;top:653.5px;font-size:23px;line-height:23px;color:#152ec4;font-weight:400;">0362 123 123</div><div class="t" style="left:1606.0px;top:654.7px;font-size:23px;line-height:23px;color:#152ec4;font-weight:400;transform:scaleX(1.0098);transform-origin:0 0;">nhanhx132@gmail.com</div><div style="position:absolute;left:443.0px;top:770.8px;width:1441.5px;height:1.6px;background:#e1e4ea;"></div><div style="position:absolute;left:473.5px;top:725.3px;width:25.0px;height:25.0px;background:#fff;border:2px solid #c8cdd8;border-radius:4px;box-sizing:border-box;"></div><div class="t" style="left:527.4px;top:726.3px;font-size:23px;line-height:23px;color:#1b1f2a;font-weight:400;">KH00019</div><div class="t" style="left:729.6px;top:726.3px;font-size:23px;line-height:23px;color:#152ec4;font-weight:400;">Trung Nguyen Coffee</div><div class="t" style="left:1105.6px;top:726.3px;font-size:23px;line-height:23px;color:#1b1f2a;font-weight:400;transform:scaleX(1.0146);transform-origin:0 0;">0102345650</div><svg style="position:absolute;left:1350.0px;top:722.5px;overflow:visible;" width="28.4" height="28.4" viewBox="0 0 28.4 28.4"><defs><linearGradient id="gph" x1="0" y1="0" x2="0" y2="1"><stop offset="0" stop-color="#25d3a6"/><stop offset="1" stop-color="#17b47e"/></linearGradient></defs><circle cx="14.2" cy="14.2" r="14.2" fill="url(#gph)"/><path d="M9.6,7.4 C10.3,7 11,7.2 11.4,7.9 L12.6,10.3 C12.9,10.9 12.8,11.6 12.3,12 L11.5,12.7 C12.2,14.5 13.6,16 15.5,16.9 L16.3,16.1 C16.7,15.6 17.4,15.5 18,15.8 L20.4,17 C21.1,17.4 21.3,18.1 20.9,18.8 L20.2,20 C19.6,21 18.4,21.5 17.2,21.1 C12.4,19.7 8.7,16 7.3,11.2 C6.9,10 7.4,8.8 8.4,8.2 Z" fill="#fff"/></svg><div class="t" style="left:1393.8px;top:725.1px;font-size:23px;line-height:23px;color:#152ec4;font-weight:400;">0362 255 255</div><div class="t" style="left:1606.0px;top:726.3px;font-size:23px;line-height:23px;color:#152ec4;font-weight:400;transform:scaleX(1.0151);transform-origin:0 0;">hgsg312@gmail.com</div><div style="position:absolute;left:443.0px;top:842.4px;width:1441.5px;height:1.6px;background:#e1e4ea;"></div><div style="position:absolute;left:473.5px;top:796.9px;width:25.0px;height:25.0px;background:#fff;border:2px solid #c8cdd8;border-radius:4px;box-sizing:border-box;"></div><div class="t" style="left:527.4px;top:797.9px;font-size:23px;line-height:23px;color:#1b1f2a;font-weight:400;">KH00020</div><div class="t" style="left:729.6px;top:797.9px;font-size:23px;line-height:23px;color:#152ec4;font-weight:400;transform:scaleX(0.9794);transform-origin:0 0;">Friendly Trading &amp; Service JSC</div><div class="t" style="left:1105.6px;top:797.9px;font-size:23px;line-height:23px;color:#1b1f2a;font-weight:400;transform:scaleX(1.0146);transform-origin:0 0;">0102345651</div><svg style="position:absolute;left:1350.0px;top:794.1px;overflow:visible;" width="28.4" height="28.4" viewBox="0 0 28.4 28.4"><defs><linearGradient id="gph" x1="0" y1="0" x2="0" y2="1"><stop offset="0" stop-color="#25d3a6"/><stop offset="1" stop-color="#17b47e"/></linearGradient></defs><circle cx="14.2" cy="14.2" r="14.2" fill="url(#gph)"/><path d="M9.6,7.4 C10.3,7 11,7.2 11.4,7.9 L12.6,10.3 C12.9,10.9 12.8,11.6 12.3,12 L11.5,12.7 C12.2,14.5 13.6,16 15.5,16.9 L16.3,16.1 C16.7,15.6 17.4,15.5 18,15.8 L20.4,17 C21.1,17.4 21.3,18.1 20.9,18.8 L20.2,20 C19.6,21 18.4,21.5 17.2,21.1 C12.4,19.7 8.7,16 7.3,11.2 C6.9,10 7.4,8.8 8.4,8.2 Z" fill="#fff"/></svg><div class="t" style="left:1393.8px;top:796.7px;font-size:23px;line-height:23px;color:#152ec4;font-weight:400;">0362 500 500</div><div class="t" style="left:1606.6px;top:797.9px;font-size:23px;line-height:23px;color:#152ec4;font-weight:400;transform:scaleX(1.0116);transform-origin:0 0;">johnb99@gmail.com</div><div style="position:absolute;left:443.0px;top:914.0px;width:1441.5px;height:1.6px;background:#e1e4ea;"></div><div style="position:absolute;left:473.5px;top:868.5px;width:25.0px;height:25.0px;background:#fff;border:2px solid #c8cdd8;border-radius:4px;box-sizing:border-box;"></div><div class="t" style="left:527.4px;top:869.6px;font-size:23px;line-height:23px;color:#1b1f2a;font-weight:400;">KH00022</div><div class="t" style="left:729.6px;top:869.6px;font-size:23px;line-height:23px;color:#152ec4;font-weight:400;transform:scaleX(0.9655);transform-origin:0 0;">Anh Dung JSC</div><div class="t" style="left:1105.6px;top:869.6px;font-size:23px;line-height:23px;color:#1b1f2a;font-weight:400;transform:scaleX(1.0146);transform-origin:0 0;">0102345652</div><svg style="position:absolute;left:1350.0px;top:865.7px;overflow:visible;" width="28.4" height="28.4" viewBox="0 0 28.4 28.4"><defs><linearGradient id="gph" x1="0" y1="0" x2="0" y2="1"><stop offset="0" stop-color="#25d3a6"/><stop offset="1" stop-color="#17b47e"/></linearGradient></defs><circle cx="14.2" cy="14.2" r="14.2" fill="url(#gph)"/><path d="M9.6,7.4 C10.3,7 11,7.2 11.4,7.9 L12.6,10.3 C12.9,10.9 12.8,11.6 12.3,12 L11.5,12.7 C12.2,14.5 13.6,16 15.5,16.9 L16.3,16.1 C16.7,15.6 17.4,15.5 18,15.8 L20.4,17 C21.1,17.4 21.3,18.1 20.9,18.8 L20.2,20 C19.6,21 18.4,21.5 17.2,21.1 C12.4,19.7 8.7,16 7.3,11.2 C6.9,10 7.4,8.8 8.4,8.2 Z" fill="#fff"/></svg><div class="t" style="left:1393.8px;top:868.4px;font-size:23px;line-height:23px;color:#152ec4;font-weight:400;">0362 212 212</div><div class="t" style="left:1606.0px;top:869.6px;font-size:23px;line-height:23px;color:#152ec4;font-weight:400;">axay@gmail.com</div><div style="position:absolute;left:443.0px;top:985.7px;width:1441.5px;height:1.6px;background:#e1e4ea;"></div><div style="position:absolute;left:473.5px;top:940.1px;width:25.0px;height:25.0px;background:#fff;border:2px solid #c8cdd8;border-radius:4px;box-sizing:border-box;"></div><div class="t" style="left:527.4px;top:941.2px;font-size:23px;line-height:23px;color:#1b1f2a;font-weight:400;">KH00023</div><div class="t" style="left:729.6px;top:941.2px;font-size:23px;line-height:23px;color:#152ec4;font-weight:400;transform:scaleX(0.9620);transform-origin:0 0;">Cong Hai LLC</div><div class="t" style="left:1105.6px;top:941.2px;font-size:23px;line-height:23px;color:#1b1f2a;font-weight:400;transform:scaleX(1.0146);transform-origin:0 0;">0102345653</div><svg style="position:absolute;left:1350.0px;top:937.3px;overflow:visible;" width="28.4" height="28.4" viewBox="0 0 28.4 28.4"><defs><linearGradient id="gph" x1="0" y1="0" x2="0" y2="1"><stop offset="0" stop-color="#25d3a6"/><stop offset="1" stop-color="#17b47e"/></linearGradient></defs><circle cx="14.2" cy="14.2" r="14.2" fill="url(#gph)"/><path d="M9.6,7.4 C10.3,7 11,7.2 11.4,7.9 L12.6,10.3 C12.9,10.9 12.8,11.6 12.3,12 L11.5,12.7 C12.2,14.5 13.6,16 15.5,16.9 L16.3,16.1 C16.7,15.6 17.4,15.5 18,15.8 L20.4,17 C21.1,17.4 21.3,18.1 20.9,18.8 L20.2,20 C19.6,21 18.4,21.5 17.2,21.1 C12.4,19.7 8.7,16 7.3,11.2 C6.9,10 7.4,8.8 8.4,8.2 Z" fill="#fff"/></svg><div class="t" style="left:1393.8px;top:940.0px;font-size:23px;line-height:23px;color:#152ec4;font-weight:400;">0362 222 222</div><div class="t" style="left:1606.0px;top:941.2px;font-size:23px;line-height:23px;color:#152ec4;font-weight:400;transform:scaleX(1.0107);transform-origin:0 0;">peterdanx28@gmail.com</div><div style="position:absolute;left:443.0px;top:1057.3px;width:1441.5px;height:1.6px;background:#e1e4ea;"></div><div style="position:absolute;left:473.5px;top:1011.8px;width:25.0px;height:25.0px;background:#fff;border:2px solid #c8cdd8;border-radius:4px;box-sizing:border-box;"></div><div class="t" style="left:527.4px;top:1012.8px;font-size:23px;line-height:23px;color:#1b1f2a;font-weight:400;">KH00024</div><div class="t" style="left:729.6px;top:1012.8px;font-size:23px;line-height:23px;color:#152ec4;font-weight:400;transform:scaleX(0.9924);transform-origin:0 0;">Minh Nhat JSC</div><div class="t" style="left:1105.6px;top:1012.8px;font-size:23px;line-height:23px;color:#1b1f2a;font-weight:400;transform:scaleX(1.0146);transform-origin:0 0;">0102345654</div><svg style="position:absolute;left:1350.0px;top:1009.0px;overflow:visible;" width="28.4" height="28.4" viewBox="0 0 28.4 28.4"><defs><linearGradient id="gph" x1="0" y1="0" x2="0" y2="1"><stop offset="0" stop-color="#25d3a6"/><stop offset="1" stop-color="#17b47e"/></linearGradient></defs><circle cx="14.2" cy="14.2" r="14.2" fill="url(#gph)"/><path d="M9.6,7.4 C10.3,7 11,7.2 11.4,7.9 L12.6,10.3 C12.9,10.9 12.8,11.6 12.3,12 L11.5,12.7 C12.2,14.5 13.6,16 15.5,16.9 L16.3,16.1 C16.7,15.6 17.4,15.5 18,15.8 L20.4,17 C21.1,17.4 21.3,18.1 20.9,18.8 L20.2,20 C19.6,21 18.4,21.5 17.2,21.1 C12.4,19.7 8.7,16 7.3,11.2 C6.9,10 7.4,8.8 8.4,8.2 Z" fill="#fff"/></svg><div class="t" style="left:1393.8px;top:1011.6px;font-size:23px;line-height:23px;color:#152ec4;font-weight:400;">0362 678 678</div><div class="t" style="left:1606.0px;top:1012.8px;font-size:23px;line-height:23px;color:#152ec4;font-weight:400;transform:scaleX(1.0198);transform-origin:0 0;">donalt1982@gmai.com</div><div style="position:absolute;left:443.0px;top:1128.9px;width:1441.5px;height:1.6px;background:#e1e4ea;"></div><div style="position:absolute;left:473.5px;top:1083.4px;width:25.0px;height:25.0px;background:#fff;border:2px solid #c8cdd8;border-radius:4px;box-sizing:border-box;"></div><div class="t" style="left:527.4px;top:1084.4px;font-size:23px;line-height:23px;color:#1b1f2a;font-weight:400;">KH00025</div><div class="t" style="left:729.6px;top:1084.4px;font-size:23px;line-height:23px;color:#152ec4;font-weight:400;">Minh Long Private Enterprise</div><div class="t" style="left:1105.6px;top:1084.4px;font-size:23px;line-height:23px;color:#1b1f2a;font-weight:400;transform:scaleX(1.0146);transform-origin:0 0;">0102345655</div><svg style="position:absolute;left:1350.0px;top:1080.6px;overflow:visible;" width="28.4" height="28.4" viewBox="0 0 28.4 28.4"><defs><linearGradient id="gph" x1="0" y1="0" x2="0" y2="1"><stop offset="0" stop-color="#25d3a6"/><stop offset="1" stop-color="#17b47e"/></linearGradient></defs><circle cx="14.2" cy="14.2" r="14.2" fill="url(#gph)"/><path d="M9.6,7.4 C10.3,7 11,7.2 11.4,7.9 L12.6,10.3 C12.9,10.9 12.8,11.6 12.3,12 L11.5,12.7 C12.2,14.5 13.6,16 15.5,16.9 L16.3,16.1 C16.7,15.6 17.4,15.5 18,15.8 L20.4,17 C21.1,17.4 21.3,18.1 20.9,18.8 L20.2,20 C19.6,21 18.4,21.5 17.2,21.1 C12.4,19.7 8.7,16 7.3,11.2 C6.9,10 7.4,8.8 8.4,8.2 Z" fill="#fff"/></svg><div class="t" style="left:1393.8px;top:1083.2px;font-size:23px;line-height:23px;color:#152ec4;font-weight:400;">0362 822 833</div><div class="t" style="left:1606.0px;top:1084.4px;font-size:23px;line-height:23px;color:#152ec4;font-weight:400;transform:scaleX(1.0316);transform-origin:0 0;">abbc111@gmail.com</div><div style="position:absolute;left:443.0px;top:1351.5px;width:1441.5px;height:1.6px;background:#d5d9e1;"></div><svg style="position:absolute;left:472.0px;top:1388.0px;overflow:visible;" width="28" height="26" viewBox="0 0 28 26"><path d="M1.5,7 L26,7 M1.5,19.5 L26,19.5" stroke="#4a5367" stroke-width="1.9" stroke-linecap="round"/><circle cx="17.5" cy="7" r="3.6" fill="#fff" stroke="#4a5367" stroke-width="1.9"/><circle cx="9.5" cy="19.5" r="3.6" fill="#fff" stroke="#4a5367" stroke-width="1.9"/></svg><div class="t" style="left:529.0px;top:1390.0px;font-size:23px;line-height:23px;color:#1b1f2a;font-weight:400;transform:scaleX(1.0214);transform-origin:0 0;">Total: 10</div><div style="position:absolute;left:1454.3px;top:1373.4px;width:111.6px;height:56.6px;background:#fff;border:1.8px solid #cfd3dc;border-radius:6px;box-sizing:border-box;"></div><div class="t" style="left:1482.9px;top:1389.8px;font-size:23px;line-height:23px;color:#1b1f2a;font-weight:400;transform:scaleX(0.9770);transform-origin:0 0;">10</div><svg style="position:absolute;left:1520.0px;top:1380.0px;overflow:visible;" width="350" height="45" viewBox="0 0 350 45"><path d="M11.5,18.2 L18.0,24.9 L24.5,18.2" fill="none" stroke="#434c64" stroke-width="1.8" stroke-linecap="round" stroke-linejoin="round"/><path d="M81.6,11.5 L81.6,33.8 M96.6,11.5 L84.8,22.6 L96.6,33.8 M139.6,11.5 L127.6,22.6 L139.6,33.8" fill="none" stroke="#b5bcc8" stroke-width="1.7" stroke-linecap="round" stroke-linejoin="round"/><path d="M272.0,11.5 L284.2,22.6 L272.0,33.8 M314.8,11.5 L327.0,22.6 L314.8,33.8 M331.0,11.5 L331.0,33.8" fill="none" stroke="#434c64" stroke-width="1.8" stroke-linecap="round" stroke-linejoin="round"/></svg><div class="t" style="left:1681.0px;top:1390.0px;font-size:23px;line-height:23px;color:#1b1f2a;font-weight:400;transform:scaleX(0.9954);transform-origin:0 0;">1 to 10</div><div style="position:absolute;left:420.6px;top:875.3px;width:44.0px;height:44.0px;background:#fff;border-radius:50%;box-shadow:0 1px 7px rgba(30,40,70,0.22);"></div><svg style="position:absolute;left:430.0px;top:885.0px;overflow:visible;" width="24" height="28" viewBox="0 0 24 28"><path d="M16,5.8 L8.3,13.3 L16,20.8" fill="none" stroke="#3c4560" stroke-width="2" stroke-linecap="round" stroke-linejoin="round"/></svg><div style="position:absolute;left:1861.0px;top:879.0px;width:44.0px;height:44.0px;background:#fff;border-radius:50%;box-shadow:0 1px 7px rgba(30,40,70,0.22);"></div><svg style="position:absolute;left:1870.0px;top:887.0px;overflow:visible;" width="24" height="28" viewBox="0 0 24 28"><path d="M10,5.3 L18.5,12.8 L10,20.3" fill="none" stroke="#3c4560" stroke-width="2" stroke-linecap="round" stroke-linejoin="round"/></svg><svg style="position:absolute;left:1929.5px;top:364.0px;overflow:visible;" width="28" height="28" viewBox="0 0 28 28"><path d="M4.6,1.2 C6,0.4 7.6,0.9 8.3,2.3 L10.8,7.2 C11.4,8.4 11.1,9.8 10.1,10.6 L8.4,12 C9.9,15.4 12.5,18.1 15.9,19.7 L17.3,18.1 C18.1,17.1 19.5,16.8 20.6,17.4 L25.6,20 C26.9,20.7 27.3,22.3 26.6,23.5 L25.4,25.5 C24.3,27.2 22.1,27.8 20.2,27.1 C11.6,24 4.8,17.3 1.3,8.8 C0.5,6.9 1.2,4.7 2.8,3.6 Z" fill="#7a849d"/></svg><svg style="position:absolute;left:2045.8px;top:364.0px;overflow:visible;" width="22" height="27" viewBox="0 0 22 27"><rect x="0" y="2.4" width="21.7" height="24.6" rx="3.2" fill="#7a849d"/><rect x="4.3" y="-0.6" width="13.1" height="6.6" rx="1.6" fill="#fff"/><rect x="5.8" y="0.2" width="10.1" height="3.6" rx="0.8" fill="#7a849d"/><path d="M5.8,15.8 L9.3,19.2 L16,12.6" fill="none" stroke="#fff" stroke-width="2.1" stroke-linecap="round" stroke-linejoin="round"/></svg><svg style="position:absolute;left:2158.5px;top:364.0px;overflow:visible;" width="26" height="27" viewBox="0 0 26 27"><rect x="0" y="4.2" width="25.1" height="22.8" rx="3.4" fill="#7a849d"/><rect x="3.6" y="-1" width="5.6" height="9.6" rx="2.6" fill="#fff"/><rect x="15.9" y="-1" width="5.6" height="9.6" rx="2.6" fill="#fff"/><rect x="5.6" y="0.6" width="1.6" height="6.2" rx="0.8" fill="#7a849d"/><rect x="17.9" y="0.6" width="1.6" height="6.2" rx="0.8" fill="#7a849d"/></svg><svg style="position:absolute;left:2271.3px;top:367.8px;overflow:visible;" width="29" height="20" viewBox="0 0 29 20"><rect x="0" y="0" width="28.6" height="19.9" rx="2.4" fill="#7a849d"/><path d="M2.2,1.6 L14.3,10.4 L26.4,1.6" fill="none" stroke="#fff" stroke-width="1.9" stroke-linejoin="round"/></svg><svg style="position:absolute;left:2388.2px;top:364.9px;overflow:visible;" width="24" height="24" viewBox="0 0 24 24"><path d="M2.6,15 L2.6,11.6 C2.6,5.6 6.8,1.1 11.7,1.1 C16.6,1.1 20.8,5.6 20.8,11.6 L20.8,15" fill="none" stroke="#7a849d" stroke-width="2.1"/><rect x="0" y="13.6" width="7" height="10.1" rx="2.8" fill="#7a849d"/><rect x="16.4" y="13.6" width="7" height="10.1" rx="2.8" fill="#7a849d"/></svg><div style="position:absolute;left:1886.0px;top:412.5px;width:571.0px;height:1.8px;background:#d5d9e1;"></div><div class="t" style="left:1902.4px;top:437.5px;font-size:23px;line-height:23px;color:#3d5af1;font-weight:400;transform:scaleX(1.0487);transform-origin:0 0;">Activity</div><div class="t" style="left:2049.0px;top:437.5px;font-size:23px;line-height:23px;color:#4a5468;font-weight:400;transform:scaleX(0.9848);transform-origin:0 0;">Purchase</div><div class="t" style="left:2195.3px;top:437.5px;font-size:23px;line-height:23px;color:#4a5468;font-weight:400;transform:scaleX(0.9951);transform-origin:0 0;">Subscriber</div><div style="position:absolute;left:1886.0px;top:484.0px;width:571.0px;height:1.6px;background:#d5d9e1;"></div><div style="position:absolute;left:1885.5px;top:482.3px;width:142.5px;height:3.8px;background:#3d5af1;border-radius:2px 2px 0 0;"></div><div style="position:absolute;left:1886px;top:414px;width:571px;height:70px;overflow:hidden;"><div style="position:absolute;left:535.2px;top:15.3px;width:44.4px;height:44.4px;background:#fff;border-radius:50%;box-shadow:0 1px 5px rgba(30,40,70,0.22);"></div></div><div class="t" style="left:2351.0px;top:437.5px;font-size:23px;line-height:23px;color:#4a5468;font-weight:400;transform:scaleX(0.9746);transform-origin:0 0;">Contac</div><svg style="position:absolute;left:2436.0px;top:441.0px;overflow:visible;" width="18" height="20" viewBox="0 0 18 20"><path d="M3.4,2 L12.6,10 L3.4,18" fill="none" stroke="#4a5468" stroke-width="1.9" stroke-linecap="round" stroke-linejoin="round"/></svg><div style="position:absolute;left:1886.0px;top:485.6px;width:571.0px;height:178.6px;background:#f0f1f4;"></div><div style="position:absolute;left:2386.0px;top:507.5px;width:43.0px;height:43.0px;background:#fff;border-radius:50%;box-shadow:0 1px 5px rgba(30,40,70,0.16);"></div><svg style="position:absolute;left:2396.0px;top:525.0px;overflow:visible;" width="24" height="8" viewBox="0 0 24 8"><circle cx="3.2" cy="4" r="1.9" fill="#4a5367"/><circle cx="11.9" cy="4" r="1.9" fill="#4a5367"/><circle cx="20.6" cy="4" r="1.9" fill="#4a5367"/></svg><svg style="position:absolute;left:1913.5px;top:507.0px;overflow:visible;" width="50" height="50" viewBox="0 0 50 50"><circle cx="25" cy="25" r="25" fill="#eec36c"/><rect x="15.5" y="15" width="19" height="22" rx="3" fill="#fff"/><rect x="19.5" y="11.8" width="11" height="6" rx="1.5" fill="#fff" stroke="#eec36c" stroke-width="1.4"/><path d="M20.8,26.6 L23.8,29.4 L29.2,23.6" fill="none" stroke="#eec36c" stroke-width="1.8" stroke-linecap="round" stroke-linejoin="round"/></svg><div class="t" style="left:1978.4px;top:507.5px;font-size:23px;line-height:23px;color:#1b1f2a;font-weight:400;transform:scaleX(0.9764);transform-origin:0 0;color:#1b1f2a;-webkit-text-stroke:0.72px #1b1f2a;">Create Data</div><div class="t" style="left:1978.4px;top:545.2px;font-size:23px;line-height:23px;color:#1f232d;font-weight:400;transform:scaleX(1.0130);transform-origin:0 0;">Create demo data for customers</div><div class="t" style="left:1978.4px;top:575.8px;font-size:23px;line-height:23px;color:#1f232d;font-weight:400;">experience goods</div><div class="t" style="left:1978.4px;top:617.5px;font-size:21px;line-height:21px;color:#5c6780;font-weight:400;transform:scaleX(0.9964);transform-origin:0 0;">Nguyen Pham Hai</div><div style="position:absolute;left:2167.6px;top:627.7px;width:3.6px;height:3.6px;background:#5c6780;border-radius:50%;"></div><div class="t" style="left:2186.0px;top:617.5px;font-size:21px;line-height:21px;color:#5c6780;font-weight:400;transform:scaleX(1.0888);transform-origin:0 0;">05/09/20</div><svg style="position:absolute;left:1913.5px;top:686.0px;overflow:visible;" width="50" height="50" viewBox="0 0 50 50"><circle cx="25" cy="25" r="25" fill="#8570f0"/><rect x="12.5" y="15.5" width="25" height="21" rx="3" fill="#fff"/><rect x="12.5" y="20.5" width="25" height="1.4" fill="#8570f0"/><path d="M19,12.5 L19,18 M31,12.5 L31,18" stroke="#fff" stroke-width="3.2" stroke-linecap="round"/><path d="M19,12.5 L19,18 M31,12.5 L31,18" stroke="#8570f0" stroke-width="1.2" stroke-linecap="round"/></svg><div class="t" style="left:1978.4px;top:686.5px;font-size:23px;line-height:23px;color:#1b1f2a;font-weight:400;transform:scaleX(1.0170);transform-origin:0 0;color:#1b1f2a;-webkit-text-stroke:0.72px #1b1f2a;">Customer Meeting Workshop</div><div class="t" style="left:1978.4px;top:724.1px;font-size:23px;line-height:23px;color:#1f232d;font-weight:400;transform:scaleX(1.0111);transform-origin:0 0;">Organise a workshop to meet customers</div><div class="t" style="left:1978.4px;top:761.4px;font-size:21px;line-height:21px;color:#5c6780;font-weight:400;transform:scaleX(0.9964);transform-origin:0 0;">Nguyen Pham Hai</div><div style="position:absolute;left:2167.6px;top:771.6px;width:3.6px;height:3.6px;background:#5c6780;border-radius:50%;"></div><div class="t" style="left:2186.0px;top:761.4px;font-size:21px;line-height:21px;color:#5c6780;font-weight:400;transform:scaleX(1.0888);transform-origin:0 0;">05/09/20</div><svg style="position:absolute;left:1913.5px;top:829.6px;overflow:visible;" width="50" height="50" viewBox="0 0 50 50"><circle cx="25" cy="25" r="25" fill="#5ccfa8"/><path transform="translate(12.5,12.8) scale(1.24) translate(-12.6,-12.4)" d="M15.2,12.8 C16.4,12 17.8,12.4 18.5,13.6 L20.6,17.4 C21.1,18.4 20.9,19.6 20,20.3 L18.7,21.4 C19.9,24.2 22.1,26.4 24.9,27.7 L26,26.4 C26.7,25.6 27.9,25.3 28.8,25.9 L32.6,28 C33.7,28.6 34.1,30 33.4,31.1 L32.4,32.7 C31.5,34.1 29.7,34.6 28.1,34 C21.2,31.4 15.7,26 12.9,19.1 C12.3,17.5 12.8,15.7 14.1,14.8 Z" fill="#fff"/></svg><div class="t" style="left:1978.4px;top:829.5px;font-size:23px;line-height:23px;color:#1b1f2a;font-weight:400;transform:scaleX(1.0338);transform-origin:0 0;color:#1b1f2a;-webkit-text-stroke:0.72px #1b1f2a;">Information Extraction</div><div class="t" style="left:1978.4px;top:867.4px;font-size:23px;line-height:23px;color:#1f232d;font-weight:400;transform:scaleX(1.0306);transform-origin:0 0;">Collect customer information</div><div class="t" style="left:1978.4px;top:904.7px;font-size:21px;line-height:21px;color:#5c6780;font-weight:400;transform:scaleX(0.9964);transform-origin:0 0;">Nguyen Pham Hai</div><div style="position:absolute;left:2167.6px;top:914.9px;width:3.6px;height:3.6px;background:#5c6780;border-radius:50%;"></div><div class="t" style="left:2186.0px;top:904.7px;font-size:21px;line-height:21px;color:#5c6780;font-weight:400;transform:scaleX(1.0888);transform-origin:0 0;">05/09/20</div><svg style="position:absolute;left:1913.5px;top:972.7px;overflow:visible;" width="50" height="50" viewBox="0 0 50 50"><circle cx="25" cy="25" r="25" fill="#ee6b6b"/><rect x="10.4" y="15" width="29.6" height="20.8" rx="3" fill="#fff"/><path d="M13.2,15.6 L37.2,15.6 L25.2,24.2Z" fill="#ee6b6b" stroke="#ee6b6b" stroke-width="1" stroke-linejoin="round"/></svg><div class="t" style="left:1978.4px;top:972.5px;font-size:23px;line-height:23px;color:#1b1f2a;font-weight:400;transform:scaleX(1.0174);transform-origin:0 0;color:#1b1f2a;-webkit-text-stroke:0.72px #1b1f2a;">Product Quotation</div><div class="t" style="left:1978.4px;top:1010.5px;font-size:23px;line-height:23px;color:#1f232d;font-weight:400;transform:scaleX(1.0043);transform-origin:0 0;">Quotation for Cao Ich Sample Product</div><div class="t" style="left:1978.4px;top:1047.9px;font-size:21px;line-height:21px;color:#5c6780;font-weight:400;transform:scaleX(0.9964);transform-origin:0 0;">Nguyen Pham Hai</div><div style="position:absolute;left:2167.6px;top:1058.1px;width:3.6px;height:3.6px;background:#5c6780;border-radius:50%;"></div><div class="t" style="left:2186.0px;top:1047.9px;font-size:21px;line-height:21px;color:#5c6780;font-weight:400;transform:scaleX(1.0888);transform-origin:0 0;">05/09/20</div><svg style="position:absolute;left:1913.5px;top:1115.6px;overflow:visible;" width="50" height="50" viewBox="0 0 50 50"><circle cx="25" cy="25" r="25" fill="#6b9cf7"/><path d="M17.5,10.5 L30,10.5 C31.5,10.5 32.5,11.5 32.5,13 L32.5,28.5 L28,34 L17.5,34 C16,34 15,33 15,31.5 L15,13 C15,11.5 16,10.5 17.5,10.5Z" fill="#fff"/><path d="M19.5,16.5 L28,16.5 M19.5,20.8 L28,20.8 M19.5,25 L22.5,25 M19.5,29.2 L22.5,29.2" stroke="#6b9cf7" stroke-width="1.6" stroke-linecap="round"/><path d="M27.5,34 L27.5,29.5 C27.5,28.8 28,28.3 28.7,28.3 L32.5,28.3" fill="#6b9cf7" stroke="#6b9cf7" stroke-width="1.3"/></svg><div class="t" style="left:1978.4px;top:1115.7px;font-size:23px;line-height:23px;color:#1b1f2a;font-weight:400;color:#1b1f2a;-webkit-text-stroke:0.72px #1b1f2a;">VIP Customer</div><div class="t" style="left:1978.4px;top:1152.5px;font-size:23px;line-height:23px;color:#1f232d;font-weight:400;transform:scaleX(1.0088);transform-origin:0 0;">Customer is the Director's friend</div><div class="t" style="left:1978.4px;top:1190.2px;font-size:21px;line-height:21px;color:#5c6780;font-weight:400;transform:scaleX(1.0031);transform-origin:0 0;">Trinh Thanh Phuong</div><div style="position:absolute;left:2190.7px;top:1200.4px;width:3.6px;height:3.6px;background:#5c6780;border-radius:50%;"></div><div class="t" style="left:2209.2px;top:1190.2px;font-size:21px;line-height:21px;color:#5c6780;font-weight:400;transform:scaleX(1.0888);transform-origin:0 0;">05/09/20</div><svg style="position:absolute;left:1913.5px;top:1258.8px;overflow:visible;" width="50" height="50" viewBox="0 0 50 50"><circle cx="25" cy="25" r="25" fill="#4fdfdf"/><path d="M25,13.5 C31.6,13.5 36.8,17.6 36.8,22.8 C36.8,28 31.6,32 25,32 C23.6,32 22.2,31.8 21,31.5 L17.2,34.8 L17.6,30.2 C14.8,28.6 13.2,25.9 13.2,22.8 C13.2,17.6 18.4,13.5 25,13.5Z" fill="#fff"/></svg><div class="t" style="left:1978.4px;top:1258.8px;font-size:23px;line-height:23px;color:#1b1f2a;font-weight:400;transform:scaleX(1.0246);transform-origin:0 0;color:#1b1f2a;-webkit-text-stroke:0.72px #1b1f2a;">Inquire about customers</div><div class="t" style="left:1978.4px;top:1295.2px;font-size:23px;line-height:23px;color:#1f232d;font-weight:400;">Hello, I am Hoa's staff,</div><div class="t" style="left:1978.4px;top:1328.0px;font-size:23px;line-height:23px;color:#1f232d;font-weight:400;transform:scaleX(0.9692);transform-origin:0 0;">Sen, are you free now?</div><div class="t" style="left:1978.4px;top:1369.7px;font-size:21px;line-height:21px;color:#5c6780;font-weight:400;">Nguyen Pham Hai</div><div style="position:absolute;left:2166.9px;top:1379.9px;width:3.6px;height:3.6px;background:#5c6780;border-radius:50%;"></div><div class="t" style="left:2186.0px;top:1369.7px;font-size:21px;line-height:21px;color:#5c6780;font-weight:400;transform:scaleX(1.0888);transform-origin:0 0;">05/09/20</div><div style="position:absolute;left:1886px;top:1420px;width:571px;height:32px;overflow:hidden;"><div style="position:absolute;left:27.5px;top:17.7px;width:50px;height:50px;border-radius:50%;background:#5fc8f5;"></div><div class="t" style="left:92.4px;top:17.5px;font-size:23px;line-height:23px;color:#1b1f2a;font-weight:400;transform:scaleX(1.0145);transform-origin:0 0;color:#1b1f2a;-webkit-text-stroke:0.72px #1b1f2a;">Send additional images</div></div>
</body></html>
